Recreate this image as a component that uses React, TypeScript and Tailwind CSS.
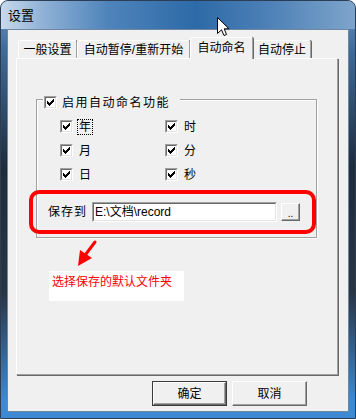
import React from "react";

const font = { fontFamily: '"Liberation Sans", "Noto Sans CJK SC", sans-serif' };

function Check() {
  return (
    <span className="inline-flex w-[13px] h-[13px] shrink-0 border border-t-[#a0a0a0] border-l-[#a0a0a0] border-b-white border-r-white">
      <span className="flex-1 flex items-center justify-center bg-white border border-t-[#696969] border-l-[#696969] border-b-[#e3e3e3] border-r-[#e3e3e3]">
        <svg width="7" height="7" viewBox="0 0 7 7" shapeRendering="crispEdges">
          <path d="M6 0h1v3h-1v1h-1v1h-1v1h-1v1h-1v-1h-1v-1h-1v-3h1v1h1v1h1v-1h1v-1h1v-1h1z" fill="#000" />
        </svg>
      </span>
    </span>
  );
}

function CheckItem({ label, focus }: { label: string; focus?: boolean }) {
  return (
    <div className="flex items-center h-[13px]">
      <Check />
      <span
        className={
          "ml-[5px] text-[12px] leading-[14px] text-black px-[1px] " +
          (focus ? "outline outline-1 outline-dotted outline-black" : "")
        }
      >
        {label}
      </span>
    </div>
  );
}

function Tab({ label, w, selected }: { label: string; w: string; selected?: boolean }) {
  if (selected) {
    return (
      <div
        className={
          w +
          " h-[22px] -mb-px relative z-10 bg-[#f0f0f0] border-l border-t border-white border-r border-r-[#a0a0a0] rounded-t-[2px] flex items-start justify-center pt-[3px] text-[12px] leading-[14px] text-black shadow-[1px_0_0_#696969]"
        }
      >
        {label}
      </div>
    );
  }
  return (
    <div
      className={
        w +
        " h-[18px] bg-[#f0f0f0] border-l border-t border-white border-r border-r-[#a0a0a0] rounded-t-[2px] flex items-center justify-center text-[12px] leading-[14px] text-black shadow-[1px_0_0_#696969]"
      }
    >
      {label}
    </div>
  );
}

function Btn({ label, def }: { label: string; def?: boolean }) {
  return (
    <div
      className={
        "w-[75px] h-[25px] flex " + (def ? "border border-[#3a3a3a]" : "")
      }
    >
      <div className="flex-1 flex items-center justify-center bg-[#f0f0f0] border border-t-white border-l-white border-b-[#696969] border-r-[#696969] shadow-[inset_-1px_-1px_0_#a0a0a0] text-[12px] text-black">
        {label}
      </div>
    </div>
  );
}

export default function App() {
  return (
    <div style={font} className="relative w-[356px] h-[419px] overflow-hidden bg-white">
      <div className="w-[356px] h-[419px] rounded-t-[8px] border border-[#2c3e55] bg-[linear-gradient(180deg,#6b97c6_0%,#3f6a98_12%,#1f2c3c_40%,#2a3544_70%,#3d8ad3_96%,#3d8ad3_100%)] flex flex-col">
        <div className="h-[28px] shrink-0 rounded-t-[7px] bg-[linear-gradient(90deg,#c8d9ec_0%,#8fb1d6_12%,#4f84bb_30%,#2d6aa7_55%,#4c80b6_75%,#7ea4cb_100%)] flex items-center pl-[7px]">
          <span className="text-[13px] leading-[15px] text-black">设置</span>
        </div>
        <div className="flex-1 mx-[6px] mb-[6px] border border-[#6f87a3] bg-[#f0f0f0] flex flex-col">
          <div className="ml-[8px] w-[322px] flex flex-col">
            <div className="h-[28px] flex items-end pl-[2px]">
              <Tab label="一般设置" w="w-[59px]" />
              <Tab label="自动暂停/重新开始" w="w-[113px]" />
              <Tab label="自动命名" w="w-[63px]" selected />
              <Tab label="自动停止" w="w-[58px]" />
            </div>
            <div className="h-[317px] border border-t-white border-l-white border-r-[#a0a0a0] border-b-[#a0a0a0] shadow-[1px_1px_0_#696969]">
              <div className="ml-[19px] mt-[40px] w-[281px] h-[139px] relative border border-[#a0a0a0] shadow-[inset_1px_1px_0_white,1px_1px_0_white]">
                <div className="absolute left-[6px] top-[-5px] h-[15px] flex items-center bg-[#f0f0f0] pl-[1px] pr-[10px]">
                  <Check />
                  <span className="ml-[5px] text-[12px] leading-[14px] text-black tracking-[1.5px]">启用自动命名功能</span>
                </div>
                <div className="mt-[20px] ml-[23px] grid grid-cols-[105px_60px] gap-y-[11px]">
                  <CheckItem label="年" focus />
                  <CheckItem label="时" />
                  <CheckItem label="月" />
                  <CheckItem label="分" />
                  <CheckItem label="日" />
                  <CheckItem label="秒" />
                </div>
                <div className="mt-[21px] ml-[11px] flex items-center">
                  <span className="w-[40px] text-[12px] leading-[14px] tracking-[1px] text-black">保存到</span>
                  <div className="ml-[4px] w-[185px] h-[20px] flex border border-t-[#a0a0a0] border-l-[#a0a0a0] border-b-white border-r-white">
                    <div className="flex-1 bg-white border border-t-[#696969] border-l-[#696969] border-b-[#e3e3e3] border-r-[#e3e3e3] flex items-center pl-[1px] text-[12px] leading-[14px] text-black">
                      E:\文档\record
                    </div>
                  </div>
                  <div className="ml-[4px] w-[19px] h-[18px] flex bg-[#f0f0f0] border border-t-white border-l-white border-b-[#696969] border-r-[#696969] shadow-[inset_-1px_-1px_0_#a0a0a0] items-end justify-center pb-[2px] text-[10px] leading-[8px] text-black">
                    ..
                  </div>
                </div>
              </div>
            </div>
          </div>
          <div className="mt-[6px] ml-[144px] flex gap-[5px]">
            <Btn label="确定" def />
            <Btn label="取消" />
          </div>
        </div>
      </div>

      {/* annotation: red rounded rect */}
      <div className="absolute left-[29px] top-[190px] w-[287px] h-[44px] border-[4px] border-[#ff0000] rounded-[10px]" />

      {/* annotation: arrow */}
      <svg className="absolute left-[74px] top-[238px]" width="26" height="32" viewBox="0 0 26 32">
        <path d="M21 4 L12 16" stroke="#ff0000" strokeWidth="3" strokeLinecap="round" />
        <polygon points="4,28 6,12 18,20" fill="#ff0000" />
      </svg>

      {/* annotation: label */}
      <div className="absolute left-[49px] top-[271px] w-[135px] h-[30px] bg-white pl-[3px] pt-[4px] text-[12px] leading-[15px] text-[#ff0000]">
        选择保存的默认文件夹
      </div>

      {/* mouse cursor */}
      <svg className="absolute left-[217px] top-[17px]" width="13" height="20" viewBox="0 0 13 20">
        <path d="M0.5 0.5 L0.5 16.5 L4.5 12.8 L7 18.5 L9.5 17.5 L7.2 11.8 L12 11.8 Z" fill="#fff" stroke="#000" strokeWidth="1" strokeLinejoin="miter" />
      </svg>
    </div>
  );
}
